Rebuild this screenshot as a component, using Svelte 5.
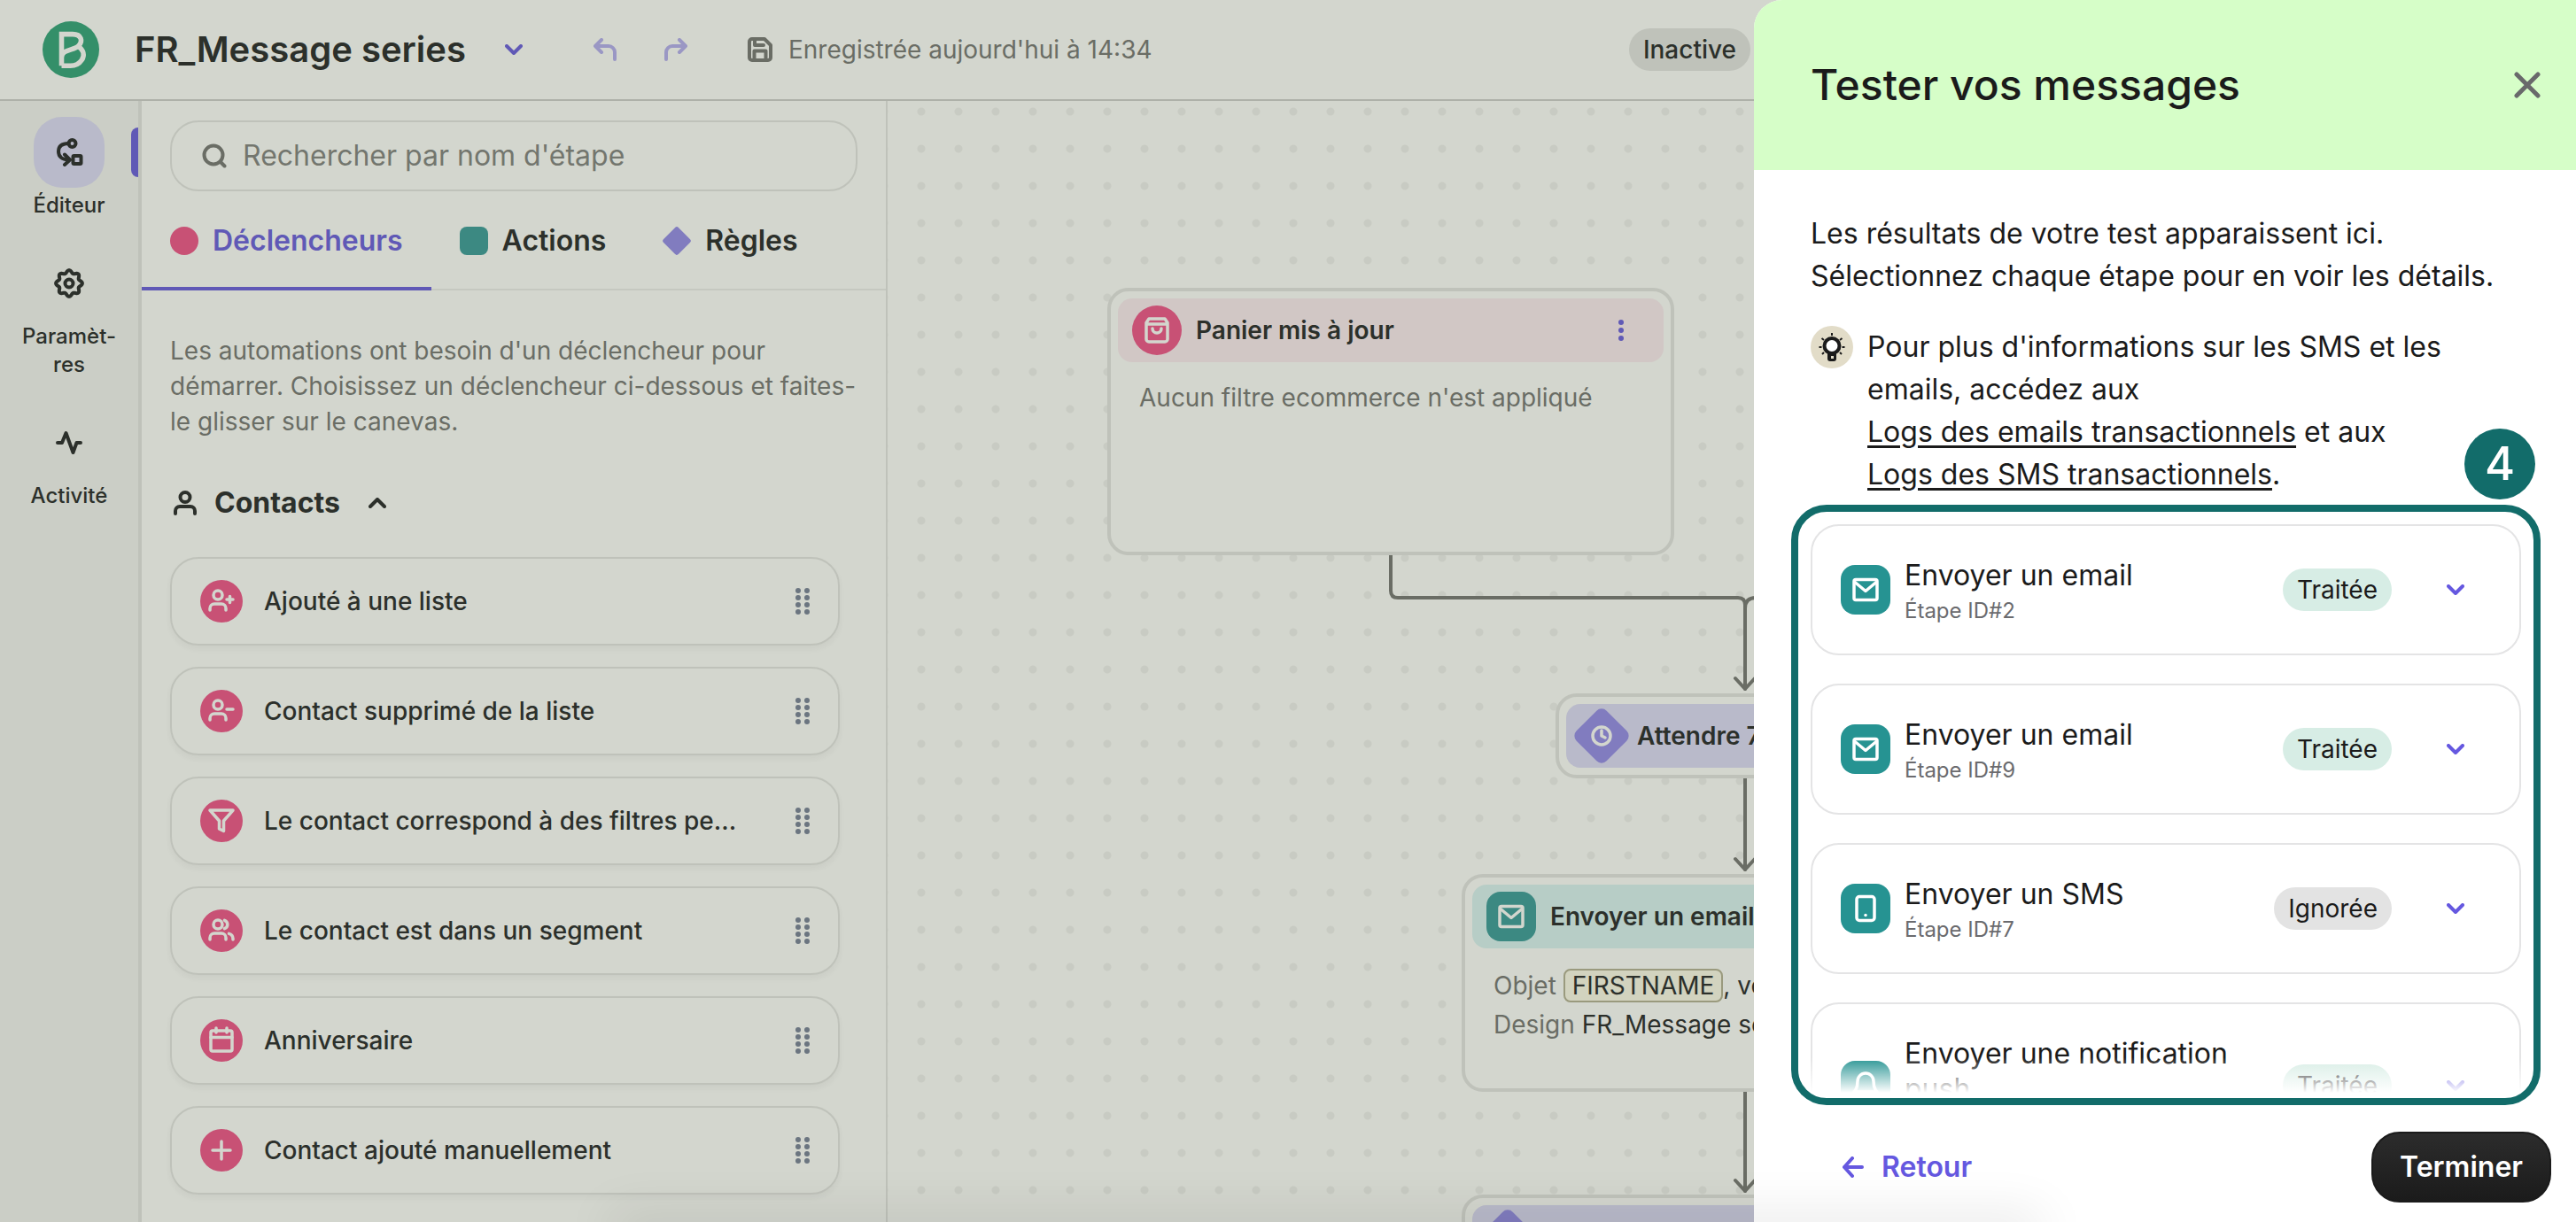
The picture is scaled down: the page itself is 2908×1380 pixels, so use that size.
<script>
  let recherche = $state('');
  let ongletActif = $state('declencheurs');
  let contactsOuvert = $state(true);

  const menu = [
    { id: 'editeur', label: 'Éditeur' },
    { id: 'parametres', label: 'Paramèt-res' },
    { id: 'activite', label: 'Activité' }
  ];

  const onglets = [
    { id: 'declencheurs', label: 'Déclencheurs' },
    { id: 'actions', label: 'Actions' },
    { id: 'regles', label: 'Règles' }
  ];

  const declencheurs = [
    { icone: 'user-plus', label: 'Ajouté à une liste' },
    { icone: 'user-minus', label: 'Contact supprimé de la liste' },
    { icone: 'filter', label: 'Le contact correspond à des filtres pe...' },
    { icone: 'users', label: 'Le contact est dans un segment' },
    { icone: 'calendar', label: 'Anniversaire' },
    { icone: 'plus', label: 'Contact ajouté manuellement' }
  ];

  const etapes = [
    { icone: 'mail', titre: 'Envoyer un email', id: 'Étape ID#2', statut: 'Traitée' },
    { icone: 'mail', titre: 'Envoyer un email', id: 'Étape ID#9', statut: 'Traitée' },
    { icone: 'phone', titre: 'Envoyer un SMS', id: 'Étape ID#7', statut: 'Ignorée' },
    { icone: 'bell', titre: 'Envoyer une notification push', id: '', statut: 'Traitée' }
  ];

  // contour de la roue crantée (8 dents)
  const roue = Array.from({ length: 96 }, (_, i) => {
    const a = (i / 96) * Math.PI * 2;
    const r = 13.3 + 1.6 * Math.cos(8 * a);
    return `${(17 + r * Math.sin(a)).toFixed(2)},${(17 - r * Math.cos(a)).toFixed(2)}`;
  }).join(' ');
</script>

<svelte:head>
  <title>FR_Message series</title>
</svelte:head>

{#snippet chevron(haut = false)}
  <svg class="trait" width="20" height="12" viewBox="0 0 20 12">
    <path d={haut ? 'M2 10l8-8 8 8' : 'M2 2l8 8 8-8'} />
  </svg>
{/snippet}

{#snippet icone(nom)}
  <svg class="trait fin" width="32" height="32" viewBox="0 0 32 32">
    {#if nom === 'user-plus' || nom === 'user-minus'}
      <circle cx="12" cy="9" r="5" />
      <path d="M3 26v-2a5 5 0 0 1 5-5h8a5 5 0 0 1 5 5v2" />
      <path d={nom === 'user-plus' ? 'M22 14h7M25.500 10.500v7' : 'M22 14h7'} />
    {:else if nom === 'filter'}
      <path d="M3 4h26L18.500 16v11.500l-5-2.500v-9z" />
    {:else if nom === 'users'}
      <circle cx="12" cy="9" r="5" />
      <path d="M3 26v-2a5 5 0 0 1 5-5h8a5 5 0 0 1 5 5v2M19.500 4.300a5 5 0 0 1 0 9.400M24.500 19.400a6 6 0 0 1 4.500 5.600v1" />
    {:else if nom === 'calendar'}
      <rect x="4" y="5" width="24" height="23" rx="2" />
      <path d="M4 12.500h24M10 2v5M22 2v5" />
    {:else if nom === 'plus'}
      <path d="M6 16h20M16 6v20" />
    {:else if nom === 'bag'}
      <path d="M7 3h18l3 4.500V26a3 3 0 0 1-3 3H7a3 3 0 0 1-3-3V7.500zM4 9h24M11 14a5 5 0 0 0 10 0" />
    {:else if nom === 'mail'}
      <rect x="3" y="4.500" width="26" height="23" rx="2" />
      <path d="M4 7.500l12 10 12-10" />
    {:else if nom === 'phone'}
      <rect x="6" y="2.500" width="20" height="27" rx="3" />
      <path d="M16 23.500v.1" />
    {:else if nom === 'bell'}
      <path d="M16 2a9 9 0 0 0-9 9c0 9-4 12-4 12h26s-4-3-4-12a9 9 0 0 0-9-9zM13 28h6" />
    {:else if nom === 'clock'}
      <circle cx="16" cy="16" r="10" />
      <path d="M16 10v6l4 2" />
    {/if}
  </svg>
{/snippet}

<div class="app">
  <header class="topbar">
    <svg class="logo" width="64" height="64" viewBox="0 0 64 64">
      <circle cx="32" cy="32" r="32" fill="#348f69" />
      <path d="M21.500 50.300V14.600H34c10 0 12 8 6.500 13.400-5 5-19 3.500-19 13M40.500 28.500c6 4 7 10 4 15-3 4.500-8 6.800-13 6.800h-10" fill="none" stroke="#d3d6ce" stroke-width="5.600" />
    </svg>
    <h1>FR_Message series</h1>
    <button class="violet options" aria-label="Options">{@render chevron()}</button>
    <button class="clair" aria-label="Annuler">
      <svg class="trait" width="26" height="26" viewBox="0 0 26 26"><path d="M2 9h15a7 7 0 0 1 7 7v8M9 2L2 9l7 7" /></svg>
    </button>
    <button class="clair" aria-label="Rétablir">
      <svg class="trait" width="26" height="26" viewBox="0 0 26 26"><path d="M24 9H9a7 7 0 0 0-7 7v8M17 2l7 7-7 7" /></svg>
    </button>
    <p class="sauvegarde">
      <svg class="trait" width="28" height="28" viewBox="0 0 28 28">
        <path d="M5 2h14l7 7v14a3 3 0 0 1-3 3H5a3 3 0 0 1-3-3V5a3 3 0 0 1 3-3zM8 3v6h10M7.500 25v-9.500h13V25" />
      </svg>
      Enregistrée aujourd'hui à 14:34
    </p>
    <span class="etat">Inactive</span>
  </header>

  <div class="espace">
    <nav class="rail">
      {#each menu as item, i}
        <button class="rail-item" class:actif={i === 0}>
          <span class="rail-icone">
            {#if item.id === 'editeur'}
              <svg class="trait" width="32" height="32" viewBox="0 0 32 32">
                <circle cx="19.500" cy="6" r="4" />
                <path d="M15.500 6C7 6 4 10 4 15s3 9.500 12 9.500M11 18.500l6 6-6 5.500" />
                <rect x="20.500" y="20" width="9" height="9" rx="1" />
              </svg>
            {:else if item.id === 'parametres'}
              <svg class="trait" width="34" height="34" viewBox="0 0 34 34">
                <polygon points={roue} />
                <circle cx="17" cy="17" r="4.500" />
              </svg>
            {:else}
              <svg class="trait" width="30" height="28" viewBox="0 0 30 28"><path d="M2 14h5l4.500-11 8 22 4-11H28" /></svg>
            {/if}
          </span>
          <span class="rail-label">{item.label}</span>
        </button>
      {/each}
    </nav>

    <aside class="panneau">
      <label class="recherche">
        <svg class="trait" width="28" height="28" viewBox="0 0 28 28"><circle cx="13" cy="13" r="10.500" /><path d="M20.500 20.500l5 5" /></svg>
        <input type="text" placeholder="Rechercher par nom d'étape" aria-label="Rechercher" bind:value={recherche} />
      </label>

      <div class="onglets" role="tablist">
        {#each onglets as o}
          <button role="tab" class:choisi={ongletActif === o.id} aria-selected={ongletActif === o.id} onclick={() => (ongletActif = o.id)}>
            <span class="forme {o.id}"></span>{o.label}
          </button>
        {/each}
      </div>

      <div class="contenu">
        <p class="aide">Les automations ont besoin d'un déclencheur pour démarrer. Choisissez un déclencheur ci-dessous et faites-le glisser sur le canevas.</p>

        <button class="groupe" aria-expanded={contactsOuvert} onclick={() => (contactsOuvert = !contactsOuvert)}>
          <svg class="trait" width="26" height="28" viewBox="0 0 26 28"><circle cx="13" cy="7.500" r="5.500" /><path d="M2 26v-3a5 5 0 0 1 5-5h12a5 5 0 0 1 5 5v3" /></svg>
          <span>Contacts</span>
          {@render chevron(contactsOuvert)}
        </button>

        {#if contactsOuvert}
          <ul class="declencheurs-liste">
            {#each declencheurs as d}
              <li>
                <span class="rond">{@render icone(d.icone)}</span>
                <span class="nom">{d.label}</span>
                <svg width="16" height="30" viewBox="0 0 16 30" fill="#6b7580">
                  {#each [3, 11, 19, 27] as y}
                    <circle cx="3" cy={y} r="3" /><circle cx="13" cy={y} r="3" />
                  {/each}
                </svg>
              </li>
            {/each}
          </ul>
        {/if}
      </div>
    </aside>

    <main class="canevas">
      <svg class="liens" width="1200" height="1300" viewBox="0 0 1200 1300">
        <path d="M568 513v40q0 8 8 8h384q8 0 8 8v95" />
        <path d="M968 573q0-12 12-12h60" />
        <path d="M968 765v103M968 1119v112" />
        <path d="M957 652l11 12 11-12M957 856l11 12 11-12M957 1219l11 12 11-12" />
      </svg>

      <section class="noeud panier">
        <header class="rose">
          <span class="rond">{@render icone('bag')}</span>
          <h2>Panier mis à jour</h2>
          <button class="violet menu-noeud" aria-label="Menu">
            <svg width="8" height="26" viewBox="0 0 8 26" fill="currentColor"><circle cx="4" cy="4" r="3" /><circle cx="4" cy="13" r="3" /><circle cx="4" cy="22" r="3" /></svg>
          </button>
        </header>
        <p>Aucun filtre ecommerce n'est appliqué</p>
      </section>

      <section class="noeud attente">
        <header class="lilas">
          <span class="losange">{@render icone('clock')}</span>
          <h2>Attendre 7</h2>
        </header>
      </section>

      <section class="noeud email">
        <header class="menthe">
          <span class="carre">{@render icone('mail')}</span>
          <h2>Envoyer un email</h2>
        </header>
        <p>Objet <mark>FIRSTNAME</mark><b>, vo</b><br />Design <b>FR_Message se</b></p>
      </section>

      <section class="noeud suite">
        <header class="lilas">
          <span class="losange"></span>
        </header>
      </section>
    </main>
  </div>

  <aside class="tiroir">
    <header>
      <h2>Tester vos messages</h2>
      <button aria-label="Fermer">
        <svg class="trait" width="30" height="30" viewBox="0 0 30 30"><path d="M3 3l24 24M27 3L3 27" stroke-width="5" /></svg>
      </button>
    </header>

    <div class="corps">
      <p class="intro">Les résultats de votre test apparaissent ici. Sélectionnez chaque étape pour en voir les détails.</p>
      <div class="astuce">
        <svg width="48" height="48" viewBox="0 0 48 48">
          <circle cx="24" cy="24" r="24" fill="#e2dcc8" />
          <path d="M24 8v3M9.500 24h3M35.500 24h3M12.500 14l2.500 2M35.500 14L33 16M13 32l2-2M35 32l-2-2" stroke="#1b1b1b" stroke-width="2" />
          <path d="M19 29h10v8a3 3 0 0 1-3 3h-4a3 3 0 0 1-3-3z" fill="#1b1b1b" />
          <circle cx="24" cy="22.500" r="8.500" fill="#fff" stroke="#1b1b1b" stroke-width="4" />
          <rect x="23" y="34" width="3" height="3" fill="#e2dcc8" />
        </svg>
        <p>Pour plus d'informations sur les SMS et les emails, accédez aux<br /><a href="#emails">Logs des emails transactionnels</a> et aux<br /><a href="#sms">Logs des SMS transactionnels</a>.</p>
      </div>

      <section class="resultats">
        <span class="numero">4</span>
        <ul>
          {#each etapes as e}
            <li>
              <span class="carre vif">{@render icone(e.icone)}</span>
              <div class="texte">
                <h3>{e.titre}</h3>
                <small>{e.id}</small>
              </div>
              <span class="badge" class:ignoree={e.statut === 'Ignorée'}>{e.statut}</span>
              <button aria-label="Voir les détails">{@render chevron()}</button>
            </li>
          {/each}
        </ul>
      </section>
    </div>

    <footer>
      <button class="retour">
        <svg class="trait" width="24" height="24" viewBox="0 0 24 24"><path d="M22 12H2M11 2L2 12l9 10" /></svg>
        Retour
      </button>
      <button class="terminer">Terminer</button>
    </footer>
  </aside>
  <div class="ombre"></div>
</div>

<style>
  :global(body) { margin: 0; }
  * { box-sizing: border-box; }
  h1, h2, h3, p, ul { margin: 0; padding: 0; }
  ul { list-style: none; }
  button { border: none; background: none; padding: 0; font: inherit; color: inherit; cursor: pointer; }
  svg { display: block; flex: none; }

  .app {
    --largeur-tiroir: 928px;
    position: relative;
    display: flex;
    flex-direction: column;
    height: 100vh;
    overflow: hidden;
    background: #d3d6ce;
    color: #2c302b;
    font-family: Inter, "Liberation Sans", sans-serif;
    font-size: 28px;
    line-height: 40px;
  }

  .trait { fill: none; stroke: currentColor; stroke-width: 4; stroke-linecap: round; stroke-linejoin: round; }
  .fin { stroke-width: 3.5; }
  .violet { color: #6059b6; }
  .clair { color: #9a97c4; }

  .topbar { display: flex; align-items: center; flex: none; height: 114px; padding: 0 calc(var(--largeur-tiroir) + 4px) 0 48px; border-bottom: 2px solid #aeb1a9; }
  h1 { margin-left: 40px; font-size: 40px; font-weight: 600; line-height: 48px; white-space: nowrap; }
  .options { margin: 0 80px 0 44px; }
  .clair + .clair { margin-left: 54px; }
  .sauvegarde { display: flex; align-items: center; gap: 18px; margin-left: 68px; color: #6a6d65; white-space: nowrap; }
  .etat { margin-left: auto; padding: 4px 16px; border-radius: 24px; background: #bfc2ba; font-weight: 500; }

  .espace { display: flex; flex: 1; min-height: 0; }

  .rail { display: flex; flex-direction: column; gap: 32px; flex: none; width: 160px; padding-top: 18px; border-right: 4px solid #bfc2ba; background: #cbcec6; }
  .rail-item { position: relative; display: flex; flex-direction: column; align-items: center; gap: 4px; }
  .rail-icone { display: grid; place-items: center; width: 80px; height: 80px; border-radius: 32px; }
  .rail-label { width: 124px; font-size: 24px; line-height: 32px; font-weight: 500; }
  .actif .rail-icone { background: #b9baca; }
  .actif::after { content: ""; position: absolute; right: 0; top: 12px; width: 8px; height: 56px; border-radius: 8px 0 0 8px; background: #6059b6; }

  .panneau { flex: none; width: 842px; border-right: 2px solid #bfc2ba; overflow: hidden; }
  .recherche { display: flex; align-items: center; gap: 16px; height: 80px; margin: 22px 32px 0; padding: 0 34px; border: 2px solid #bfc2ba; border-radius: 32px; color: #6a6d65; }
  .recherche input { flex: 1; min-width: 0; border: none; outline: none; background: none; font: inherit; font-size: 32px; color: #2c302b; }
  .recherche input::placeholder { color: #73766e; opacity: 1; }
  .onglets { display: flex; height: 112px; border-bottom: 2px solid #c5c8c0; }
  .onglets button { display: flex; align-items: center; gap: 16px; height: 112px; padding: 4px 32px 0; font-size: 32px; font-weight: 600; border-bottom: 4px solid transparent; }
  .onglets button.choisi { color: #6059b6; border-color: #6059b6; }
  .forme { width: 32px; height: 32px; }
  .forme.declencheurs { border-radius: 50%; background: #c85175; }
  .forme.actions { border-radius: 8px; background: #3c8982; }
  .forme.regles { border-radius: 4px; background: #817cbf; transform: rotate(45deg) scale(.75); }

  .contenu { padding: 48px 32px 0; }
  .aide { color: #6a6d65; }
  .groupe { display: flex; align-items: center; gap: 20px; margin: 52px 0 41px 4px; font-size: 32px; font-weight: 700; }
  .groupe span { margin-right: 12px; }
  .declencheurs-liste { display: flex; flex-direction: column; gap: 24px; padding-right: 20px; }
  .declencheurs-liste li { display: flex; align-items: center; gap: 24px; height: 100px; padding: 0 32px; border: 2px solid #bfc2ba; border-radius: 32px; box-shadow: 0 4px 6px rgba(60, 65, 55, .05); font-weight: 500; }
  .nom { flex: 1; }
  .rond { display: grid; place-items: center; flex: none; width: 48px; height: 48px; border-radius: 50%; background: #c85175; color: #d3d6ce; }

  .canevas { position: relative; flex: 1; overflow: hidden; background: radial-gradient(circle, #c8cbc3 4px, transparent 5px) 17px -9px / 42px 42px; }
  .liens { position: absolute; left: 0; top: 0; fill: none; stroke: #6a6d65; stroke-width: 4; stroke-linecap: round; stroke-linejoin: round; }
  .noeud { position: absolute; width: 640px; padding: 8px; border: 4px solid #bfc2ba; border-radius: 24px; background: #d3d6ce; }
  .noeud header { display: flex; align-items: center; gap: 16px; height: 72px; padding: 0 16px; border-radius: 16px; }
  .noeud h2 { font-size: 28px; line-height: 40px; font-weight: 600; white-space: nowrap; }
  .noeud p { padding: 20px 24px; line-height: 44px; color: #6a6d65; white-space: nowrap; }
  .noeud b { font-weight: 400; color: #2c302b; }
  .noeud mark { padding: 0 8px; border: 2px solid #9a9a7e; border-radius: 8px; background: #d2d3bf; color: #2c302b; }
  .noeud .rond { width: 56px; height: 56px; }
  .panier { left: 248px; top: 211px; height: 302px; }
  .noeud.panier p { line-height: 40px; }
  .attente { left: 754px; top: 669px; width: 428px; }
  .email { left: 648px; top: 873px; height: 246px; }
  .suite { left: 648px; top: 1235px; }
  .rose { background: #d1c7c5; }
  .lilas { background: #b9baca; }
  .menthe { background: #b7cdc6; }
  .menu-noeud { margin-left: auto; padding-right: 28px; }
  .carre { display: grid; place-items: center; flex: none; width: 56px; height: 56px; border-radius: 16px; background: #3c8982; color: #d3d6ce; }
  .losange { display: grid; place-items: center; width: 48px; height: 48px; border-radius: 8px; background: #817cbf; color: #d3d6ce; transform: rotate(45deg); }
  .losange :global(svg) { transform: rotate(-45deg); }

  .tiroir { position: absolute; top: 0; right: 0; bottom: 0; display: flex; flex-direction: column; width: var(--largeur-tiroir); max-width: 100%; overflow: hidden; border-radius: 32px 0 0 0; background: #fff; color: #1b1b1b; }
  .tiroir > header { display: flex; align-items: center; justify-content: space-between; flex: none; height: 192px; padding: 0 40px 0 64px; background: #d6fec8; }
  .tiroir > header h2 { font-size: 48px; line-height: 56px; font-weight: 500; }
  .tiroir > header button { color: #69696b; }
  .corps { display: flex; flex-direction: column; flex: 1; min-height: 0; padding: 48px 40px 0; font-size: 32px; line-height: 48px; }
  .intro { padding: 0 24px; }
  .astuce { display: flex; gap: 16px; margin: 32px 24px 10px; }
  .astuce a { color: inherit; text-decoration-thickness: 3px; text-underline-offset: 4px; }

  .resultats { position: relative; flex: 1; min-height: 0; margin: 0 0 0 2px; padding: 14px 14px 6px; border: 8px solid #126c6a; border-radius: 40px; }
  .resultats ul { position: relative; display: flex; flex-direction: column; gap: 32px; height: 100%; overflow: hidden; }
  .resultats ul::after { content: ""; position: absolute; left: 0; right: 0; bottom: 0; height: 40px; background: linear-gradient(rgba(255, 255, 255, 0), #fff); }
  .resultats li { display: flex; align-items: center; flex: none; padding: 32px 62px 32px 32px; border: 2px solid #e4e4e5; border-radius: 32px; }
  .vif { background: #269392; color: #fff; }
  .texte { display: flex; flex-direction: column; gap: 4px; flex: 1; padding: 4px 16px 0; }
  .texte h3 { font-size: 32px; line-height: 40px; font-weight: 400; }
  .texte small { min-height: 32px; font-size: 24px; line-height: 32px; color: #6b6b6e; }
  .badge { padding: 4px 16px; border-radius: 24px; background: #d7ede5; font-size: 28px; line-height: 40px; font-weight: 400; }
  .badge.ignoree { background: #e3e3e3; }
  .resultats button { margin-left: 62px; color: #6558e0; }
  .numero { position: absolute; right: -2px; top: -94px; width: 80px; height: 80px; border-radius: 50%; background: #126c6a; color: #fff; font-size: 52px; line-height: 80px; font-weight: 500; text-align: center; }

  footer { display: flex; align-items: center; justify-content: space-between; flex: none; padding: 30px 28px 22px 100px; font-size: 32px; font-weight: 600; }
  .retour { display: flex; align-items: center; gap: 20px; color: #6558e0; }
  .terminer { height: 80px; padding: 0 30px; border: 2px solid #1b1b1b; border-radius: 32px; background: linear-gradient(#2c2c2c, #1b1b1b); color: #fff; }

  .ombre { position: absolute; top: 100%; left: 24%; width: 55%; height: 20px; box-shadow: 0 0 56px 8px rgba(0, 0, 0, .1); pointer-events: none; }
</style>
